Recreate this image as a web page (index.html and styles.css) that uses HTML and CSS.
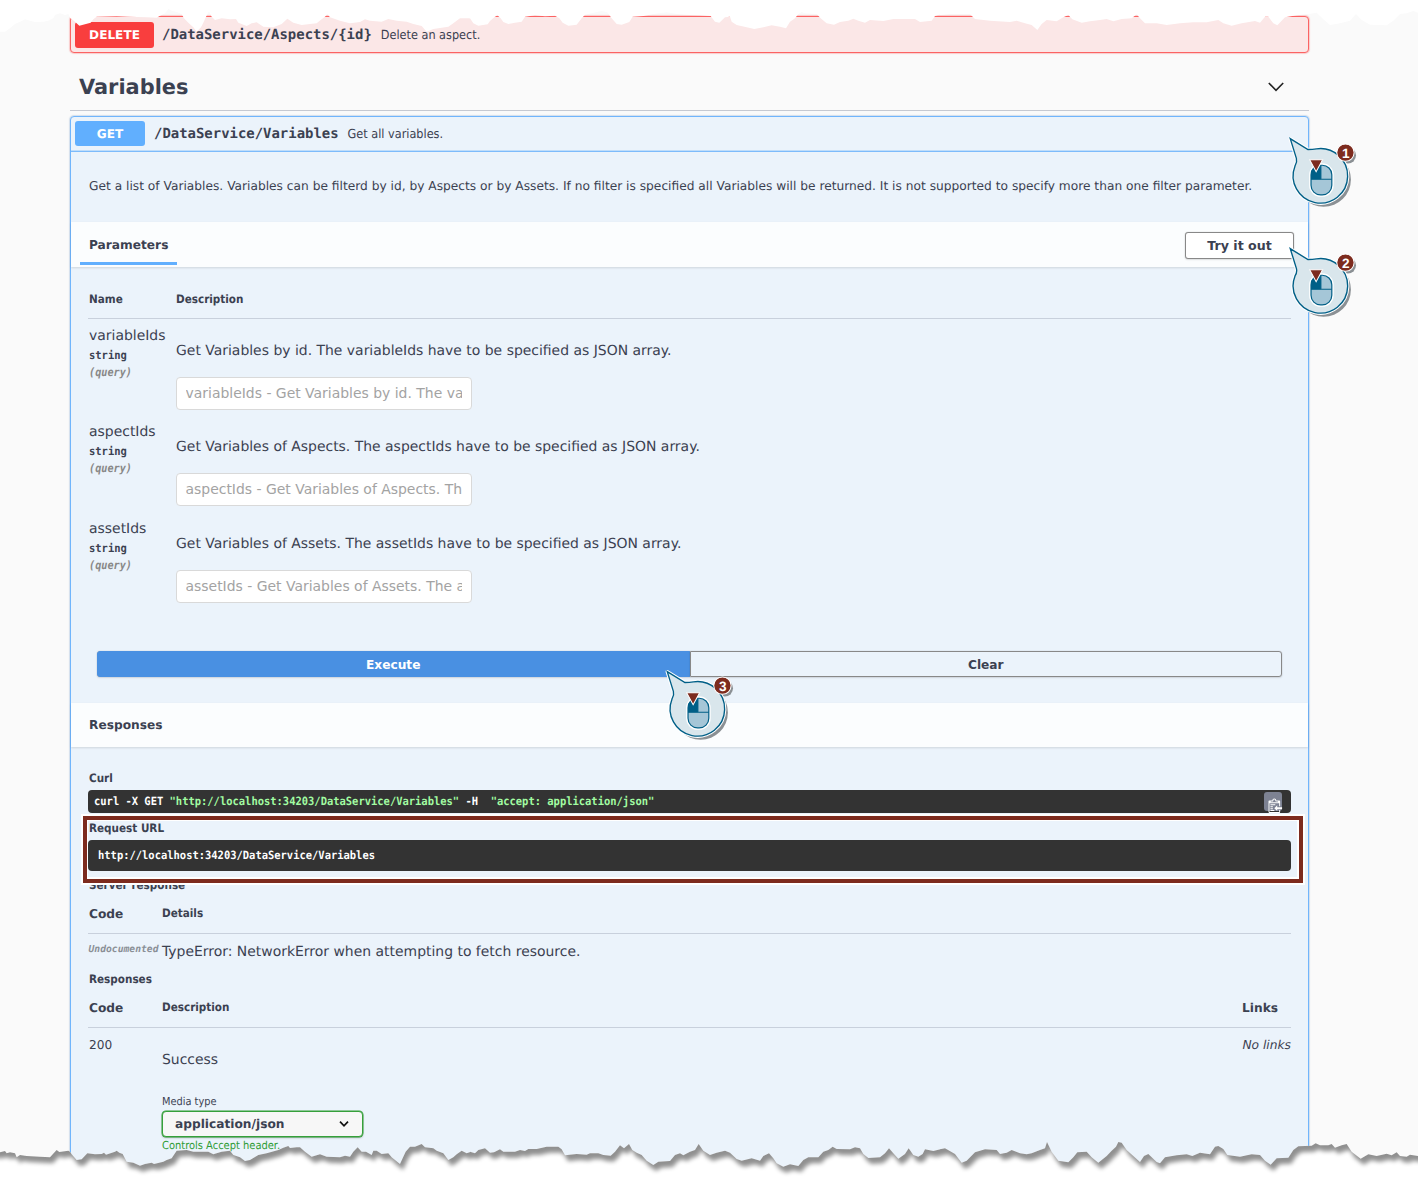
FILE: index.html
```html
<!DOCTYPE html>
<html lang="en">
<head>
<meta charset="utf-8">
<title>DataService API</title>
<link rel="stylesheet" href="styles.css">
</head>
<body>
<main class="page">
  <section class="op op-delete">
    <div class="summary">
      <span class="badge badge-delete">DELETE</span>
      <span class="path">/DataService/Aspects/{id}</span>
      <span class="brief">Delete an aspect.</span>
    </div>
  </section>

  <header class="tag">
    <h1>Variables</h1>
    <svg class="chevron" width="18" height="12" viewBox="0 0 18 12"><path d="M1.8 2 9 9.3 16.2 2" fill="none" stroke="#222" stroke-width="1.6"/></svg>
  </header>

  <section class="op op-get">
    <div class="summary">
      <span class="badge badge-get">GET</span>
      <span class="path">/DataService/Variables</span>
      <span class="brief">Get all variables.</span>
    </div>
    <p class="about">Get a list of Variables. Variables can be filterd by id, by Aspects or by Assets. If no filter is specified all Variables will be returned. It is not supported to specify more than one filter parameter.</p>

    <div class="bar bar-params">
      <h4 class="tab">Parameters</h4>
      <button class="btn try">Try it out</button>
    </div>
    <div class="params">
      <div class="row head params-head"><span>Name</span><span>Description</span></div>
      <div class="row param">
        <div class="name"><div>variableIds</div><div class="type"><span class="mono">string</span></div><div class="in"><span class="mono">(query)</span></div></div>
        <div class="desc"><div>Get Variables by id. The variableIds have to be specified as JSON array.</div><input placeholder="variableIds - Get Variables by id. The variableIds have to be specified as JSON array."></div>
      </div>
      <div class="row param param-tall">
        <div class="name"><div>aspectIds</div><div class="type"><span class="mono">string</span></div><div class="in"><span class="mono">(query)</span></div></div>
        <div class="desc"><div>Get Variables of Aspects. The aspectIds have to be specified as JSON array.</div><input placeholder="aspectIds - Get Variables of Aspects. The aspectIds have to be specified as JSON array."></div>
      </div>
      <div class="row param">
        <div class="name"><div>assetIds</div><div class="type"><span class="mono">string</span></div><div class="in"><span class="mono">(query)</span></div></div>
        <div class="desc"><div>Get Variables of Assets. The assetIds have to be specified as JSON array.</div><input placeholder="assetIds - Get Variables of Assets. The assetIds have to be specified as JSON array."></div>
      </div>
      <div class="actions">
        <button class="btn execute">Execute</button>
        <button class="btn clear">Clear</button>
      </div>
    </div>

    <div class="bar bar-responses"><h4>Responses</h4></div>
    <div class="responses">
      <h5>Curl</h5>
      <div class="code curl">
        <span class="mono">curl -X GET <span class="str">"http://localhost:34203/DataService/Variables"</span> -H  <span class="str">"accept: application/json"</span></span>
        <span class="copy"><svg width="15" height="16" viewBox="0 0 15 16"><path transform="translate(1.500 1.500) scale(.97)" fill="#fff" fill-rule="evenodd" d="M2 13h4v1H2v-1zm5-6H2v1h5V7zm2 3V8l-3 3 3 3v-2h5v-2H9zM4.500 9H2v1h2.500V9zM2 12h2.500v-1H2v1zm9 1h1v2c-.02.28-.11.52-.3.7-.19.18-.42.28-.7.3H1c-.55 0-1-.45-1-1V4c0-.55.45-1 1-1h3c0-1.110.890-2 2-2 1.110 0 2 .890 2 2h3c.55 0 1 .45 1 1v5h-1V6H1v9h10v-2zM2 5h8c0-.55-.45-1-1-1H8c-.55 0-1-.45-1-1s-.45-1-1-1-1 .45-1 1-.45 1-1 1H3c-.55 0-1 .45-1 1z"/></svg></span>
      </div>
      <h5 class="url-title">Request URL</h5>
      <div class="code url"><span class="mono">http://localhost:34203/DataService/Variables</span></div>
      <h5 class="server-title">Server response</h5>
      <div class="row head resp-head"><span class="wide">Code</span><span>Details</span></div>
      <div class="row resp error"><span class="undoc">Undocumented</span><span>TypeError: NetworkError when attempting to fetch resource.</span></div>
      <h5>Responses</h5>
      <div class="row head resp-head"><span class="wide">Code</span><span>Description</span><span class="wide links">Links</span></div>
      <div class="row resp ok">
        <span class="status">200</span>
        <div class="result">
          <div class="success">Success</div>
          <div class="media">Media type</div>
          <div class="select"><span>application/json</span><svg width="12" height="10" viewBox="0 0 12 10"><path d="M2 2.600 6 6.800 10 2.600" fill="none" stroke="#111" stroke-width="1.7"/></svg></div>
          <div class="accept">Controls Accept header.</div>
        </div>
        <span class="nolinks">No links</span>
      </div>
    </div>
  </section>
</main>

<div class="highlight"></div>

<svg class="defs" width="0" height="0">
  <defs>
    <g id="callout">
      <g fill="#8b9094"><circle cx="131" cy="163" r="80"/><circle cx="202" cy="92" r="24"/></g>
      <path d="M33 43 L85 75 Q98 75 110 73 A80 80 0 1 1 47 123 Q54 112 51 101 Z" fill="#fff" stroke="#fff" stroke-width="10" stroke-linejoin="round"/>
      <path d="M33 43 L85 75 Q98 75 110 73 A80 80 0 1 1 47 123 Q54 112 51 101 Z" fill="#d9e6ec" stroke="#005f87" stroke-width="4"/>
      <rect x="91" y="118" width="67" height="93" rx="31" fill="none" stroke="#fff" stroke-width="5"/>
      <rect x="94" y="121" width="61" height="87" rx="28" fill="#a5c6d7"/>
      <path d="M94 162 V149 Q94 121 123 121 V162 Z" fill="#005f87"/>
      <path d="M94 162 H155 M123 121 V162" stroke="#005f87" stroke-width="3"/>
      <rect x="94" y="121" width="61" height="87" rx="28" fill="none" stroke="#005f87" stroke-width="3.500"/>
      <path d="M90 105 H128 L109 140 Z" fill="#7d2b1e" stroke="#fff" stroke-width="3"/>
      <circle cx="195" cy="84" r="25.500" fill="#7d2b1e" stroke="#fff" stroke-width="3"/>
    </g>
  </defs>
</svg>
<svg class="callout c1" width="92" height="92" viewBox="0 0 270 270"><use href="#callout"/><text x="196" y="99">1</text></svg>
<svg class="callout c2" width="92" height="92" viewBox="0 0 270 270"><use href="#callout"/><text x="196" y="99">2</text></svg>
<svg class="callout c3" width="92" height="92" viewBox="0 0 270 270"><use href="#callout"/><text x="196" y="99">3</text></svg>

<!-- Torn paper edges; each piece is traced at three units per pixel -->
<svg class="torn torn-top" width="1418" height="40" viewBox="0 0 4254 120" fill="#fff">
  <polygon points="0,0 0,95 15,95 30,85 45,72 60,65 75,58 90,62 105,66 130,65 145,62 160,55 165,45 180,40 195,45 205,42 210,53 225,65 238,77 255,73 272,68 280,58 290,50 350,49 385,50 440,52 470,53 480,47 495,40 505,27 515,32 530,36 545,42 552,55 565,68 580,82 590,95 603,82 610,68 618,50 627,34 635,50 645,60 665,55 690,58 708,57 715,68 740,78 755,70 770,67 790,80 820,82 845,72 862,56 880,68 905,75 930,72 950,70 962,60 975,50 982,42 990,52 1005,57 1020,62 1050,70 1080,66 1095,58 1110,62 1145,65 1165,57 1190,62 1220,65 1240,72 1265,78 1280,95 1300,87 1325,83 1345,80 1360,70 1380,55 1410,55 1410,0"/>
  <polygon transform="translate(1410 0)" points="-2,0 -2,55 0,55 10,70 25,77 53,73 60,63 73,52 82,46 92,55 100,66 115,72 135,68 155,65 165,50 195,46 225,49 255,47 268,55 278,68 295,77 320,74 335,55 345,44 370,38 395,33 412,37 425,55 440,72 455,74 478,66 488,50 520,48 550,42 590,37 620,42 660,45 690,46 722,48 735,65 748,68 765,52 780,50 785,65 800,75 830,82 853,87 880,82 905,76 930,80 948,85 960,65 975,55 985,42 995,36 1005,40 1040,42 1052,55 1070,70 1092,74 1110,66 1135,62 1150,56 1165,62 1185,68 1200,60 1240,63 1270,57 1335,57 1350,66 1385,62 1395,48 1411,43 1411,0"/>
  <polygon transform="translate(2820 0)" points="0,0 0,45 30,42 90,42 105,57 150,62 210,66 230,62 255,70 275,75 292,90 305,72 320,60 350,64 370,52 385,45 397,58 425,68 450,64 480,60 500,57 520,64 545,57 575,55 590,43 600,55 615,70 650,70 680,75 720,70 760,67 800,67 835,60 850,70 875,77 905,70 945,63 960,68 975,50 985,50 1000,70 1012,76 1035,52 1070,46 1105,42 1130,38 1150,58 1170,75 1200,70 1230,62 1248,42 1265,60 1290,74 1340,76 1360,62 1380,42 1400,40 1420,33 1434,38 1434,0"/>
</svg>
<svg class="torn torn-bottom" width="1418" height="50" viewBox="0 0 4254 150" fill="#fff">
  <defs>
    <filter id="edge" filterUnits="userSpaceOnUse" x="-60" y="0" width="4380" height="400" color-interpolation-filters="sRGB">
      <feOffset in="SourceAlpha" dx="10" dy="18"/>
      <feGaussianBlur stdDeviation="6" result="b"/>
      <feFlood flood-color="#909090"/>
      <feComposite operator="out" in2="b"/>
      <feComposite operator="in" in2="SourceAlpha" result="s"/>
      <feMerge><feMergeNode in="SourceGraphic"/><feMergeNode in="s"/></feMerge>
    </filter>
  </defs>
  <g filter="url(#edge)">
    <polygon transform="translate(0 -510)" points="-60,900 -60,577 0,577 15,573 20,580 30,577 45,580 50,592 60,585 80,588 120,590 150,592 165,575 170,570 178,576 205,572 210,575 215,583 230,600 245,598 262,580 285,583 305,582 312,578 318,584 345,575 350,572 358,578 368,582 380,605 400,608 420,617 435,612 455,608 462,612 490,605 500,600 515,595 530,572 560,570 580,575 625,575 640,583 665,575 690,572 700,585 720,592 735,603 750,600 775,585 800,580 835,570 850,563 865,558 870,564 890,562 900,562 915,575 935,590 960,583 980,590 1020,592 1035,587 1050,590 1060,575 1073,562 1085,575 1098,575 1115,585 1120,572 1130,572 1145,582 1165,580 1175,592 1200,612 1210,590 1217,575 1230,560 1245,560 1265,552 1275,562 1300,565 1310,572 1330,580 1345,600 1360,592 1370,583 1385,572 1400,580 1411,576 1411,900"/>
    <polygon transform="translate(1410 -90)" points="0,480 0,155 15,160 25,150 45,145 60,158 72,157 90,148 100,155 135,155 150,150 165,153 175,147 200,147 230,140 265,140 275,148 285,166 320,162 350,164 360,160 385,160 400,165 422,167 435,155 450,136 462,145 477,132 487,150 500,158 515,165 530,182 550,195 565,185 600,183 615,165 630,160 640,166 660,155 675,150 686,132 700,152 720,165 740,158 765,152 780,158 800,177 815,182 845,175 870,182 880,168 897,160 910,175 920,190 940,200 960,193 985,198 1000,180 1015,172 1045,172 1060,155 1075,150 1088,140 1100,147 1140,148 1155,142 1170,145 1180,162 1195,174 1230,172 1245,160 1257,145 1270,160 1285,176 1305,162 1316,145 1330,165 1345,170 1358,162 1365,148 1390,153 1411,148 1411,480"/>
    <polygon transform="translate(2820 -90)" points="0,480 0,148 15,145 45,162 65,188 80,182 105,157 135,148 170,150 180,162 200,158 215,150 240,160 260,163 275,160 300,150 315,145 321,126 335,155 355,182 385,187 400,172 412,157 440,155 455,172 475,188 500,168 515,152 528,140 535,126 545,128 560,150 600,186 612,168 625,162 650,186 660,190 675,172 710,166 740,163 757,168 780,158 810,163 825,140 835,138 850,147 862,165 900,170 935,163 960,165 975,182 992,194 1010,175 1045,173 1060,150 1075,139 1115,137 1127,130 1140,136 1165,136 1175,132 1185,143 1205,136 1220,132 1235,155 1262,176 1285,163 1310,168 1340,161 1355,166 1370,157 1380,168 1400,170 1410,164 1434,168 1494,168 1494,480"/>
  </g>
</svg>
</body>
</html>
```
FILE: styles.css
```css
* { box-sizing: border-box; }
html, body { margin: 0; }
body {
  position: relative;
  height: 1180px;
  overflow: hidden;
  background: #fafafa;
  color: #3b4151;
  font-family: "DejaVu Sans", sans-serif;
  font-size: 13.95px;
  text-rendering: geometricPrecision;
}
h1, h4, h5, p { margin: 0; }
span, h4, h5 { white-space: pre; }

.page { width: 1239px; margin-left: 70px; padding-top: 16px; height: 1180px; }

/* Operation blocks */
.op { border: 1px solid; border-radius: 4px; }
.op-delete { height: 37px; border-color: #fb6363; background: #fbe7e7; box-shadow: 0 0 1px 1px rgba(249, 62, 62, .25); }
.op-get { margin-top: 5px; height: 1080px; border-color: #70b5fc; background: #ebf3fb; box-shadow: 0 0 1px 1px rgba(97, 140, 190, .25); }
.summary { display: flex; align-items: center; height: 35px; padding-left: 4px; }
.op-get .summary { border-bottom: 1px solid #7dbbfb; box-shadow: inset 0 -1px 0 rgba(125, 187, 251, .4); }
.badge {
  border-radius: 3px;
  color: #fff;
  text-align: center;
  font-weight: bold;
  font-size: 12.1px;
}
.badge-delete { width: 79px; height: 26px; line-height: 26px; background: #f93e3e; }
.badge-get { width: 70px; height: 25px; margin-top: -1px; line-height: 26px; background: #61affe; }
.path {
  margin-left: 9px;
  font: bold 13.95px/24px "DejaVu Sans Mono", monospace;
}
.op-delete .path { margin-left: 8px; }
.brief { margin-left: 9px; font: 12.55px/24px "DejaVu Sans Condensed", "DejaVu Sans", sans-serif; }

.tag {
  display: flex;
  justify-content: space-between;
  height: 58px;
  padding: 16px 24px 0 9px;
  border-bottom: 1px solid #c6c9d1;
}
.tag h1 { font-size: 20.9px; line-height: 36px; }
.chevron { margin-top: 12px; }

.about { height: 70px; padding: 24px 0 0 18px; font-size: 12.23px; line-height: 20px; white-space: nowrap; }

.bar {
  display: flex;
  background: #fbfdfe;
  box-shadow: 0 1px 2px rgba(0, 0, 0, .12);
}
.bar h4 { font-size: 12.2px; }
.bar-params { height: 45px; justify-content: space-between; padding: 0 14px 0 9px; }
.tab { width: 97px; height: 43px; padding: 5px 0 0 9px; line-height: 36px; border-bottom: 3px solid #61affe; }
.bar-responses { height: 44px; padding-left: 18px; line-height: 44px; }
.btn {
  padding: 0;
  border: 1px solid #888;
  border-radius: 3px;
  background: transparent;
  box-shadow: 0 0 1px rgba(0, 0, 0, .3), 0 1px 2px rgba(0, 0, 0, .1);
  color: #3b4151;
  font: bold 12.2px/25px "DejaVu Sans", sans-serif;
}
.try { width: 109px; height: 27px; margin-top: 10px; font-size: 12.6px; line-height: 24px; background: #fff; }

/* Tables */
.row { display: grid; grid-template-columns: 87px 1fr; padding-left: 1px; }
.head {
  border-bottom: 1px solid #c8d0dc;
  font: bold 11.6px/20px "DejaVu Sans Condensed", "DejaVu Sans", sans-serif;
}
.params { height: 436px; padding: 0 17px; }
.params-head { height: 52px; padding-top: 22px; }
.param { height: 96px; line-height: 20px; }
.param-tall { height: 97px; }
.name { padding-top: 7px; }
.mono {
  display: inline-block;
  font: bold 11.4px/18px "DejaVu Sans Mono", monospace;
  transform: scaleX(.918);
  transform-origin: left center;
}
.type { height: 18px; display: flex; }
.in { height: 17px; margin-top: -1px; display: flex; }
.in .mono { color: #888; font-style: italic; transform: scaleX(.895); }
.desc { padding-top: 22px; }
.desc input {
  display: block;
  width: 296.5px;
  height: 33px;
  margin: 16px 0 0 -.5px;
  padding: 0 9px 2px;
  border: 1px solid #d9d9d9;
  border-radius: 4px;
  background: #fff;
  font: inherit;
}
.desc input::placeholder { color: #a3a3a3; opacity: 1; }
.actions { display: flex; margin: 43px 9px 0; }
.actions .btn { flex: 1; height: 26px; }
.btn.execute { border-color: #4990e2; border-radius: 3px 0 0 3px; background: #4990e2; color: #fff; padding-top: 1px; }
.btn.clear { border-radius: 0 3px 3px 0; padding-top: 1px; }

/* Responses */
.responses { padding: 21px 17px 0; }
h5 {
  padding-left: 1px;
  font: bold 11.6px/20px "DejaVu Sans Condensed", "DejaVu Sans", sans-serif;
}
.code {
  display: flex;
  align-items: center;
  margin-top: 2px;
  border-radius: 4px;
  background: #333;
  color: #fff;
  overflow: hidden;
}
.curl { height: 22.5px; padding-left: 6px; justify-content: space-between; }
.curl .mono { margin-top: -1px; }
.str { color: #a2fca2; }
.copy { width: 18px; height: 19px; margin-right: 9px; margin-top: 1px; padding: 4px 0 0 3px; border-radius: 3px; background: #7d8293; flex: none; }
.copy svg { display: block; overflow: visible; }
.url { height: 30.5px; padding-left: 9.5px; }
.url .mono { margin-top: -1px; }
.url-title { margin-top: 5.5px; }
.server-title { margin-top: 4px; }
.resp-head { grid-template-columns: 73px 1fr auto; height: 39px; padding-top: 8.5px; }
.resp-head .wide { margin-top: .5px; font: bold 12.2px/20px "DejaVu Sans", sans-serif; }
.links { padding-right: 13px; }
.resp { grid-template-columns: 73px 1fr auto; line-height: 20px; }
.error { height: 35px; padding-top: 8px; }
.undoc { margin-top: -2px; margin-left: -.5px; color: #8a8f96; font: italic bold 9.7px/20px "DejaVu Sans Mono", monospace; }
.status { margin-top: 7px; font-size: 12.2px; }
.nolinks { margin-top: 7px; font-size: 12.25px; font-style: italic; }
.success { margin-top: 22px; }
.media { height: 19px; margin-top: 22px; font: 10.9px/20px "DejaVu Sans Condensed", "DejaVu Sans", sans-serif; }
.select {
  display: flex;
  align-items: center;
  justify-content: space-between;
  width: 201px;
  height: 26px;
  padding: 0 12px;
  border: 1px solid #36a03b;
  border-radius: 4px;
  background: #f7f7f7;
  box-shadow: 0 0 0 .5px #36a03b, 0 1px 2px rgba(0, 0, 0, .25);
  font-size: 12.2px;
  font-weight: bold;
}
.accept { color: #2f9c35; font: 11.02px/18px "DejaVu Sans Condensed", "DejaVu Sans", sans-serif; }

/* Annotations laid over the page */
.highlight {
  position: absolute;
  left: 83px;
  top: 816px;
  width: 1220px;
  height: 67px;
  border: 4px solid #7d2b1e;
  box-shadow: 0 0 0 2px #fff, inset 0 0 0 1px #fff, inset -1px -1px 0 1px #fff;
}
.defs { position: absolute; }
.callout { position: absolute; }
.callout text { fill: #fff; font: bold 40px "Liberation Sans", sans-serif; text-anchor: middle; }
.c1 { left: 1279px; top: 124px; }
.c2 { left: 1279px; top: 234px; }
.c3 { left: 656px; top: 657px; }
.torn { position: absolute; left: 0; display: block; }
.torn-top { top: 0; }
.torn-bottom { top: 1130px; }
```
